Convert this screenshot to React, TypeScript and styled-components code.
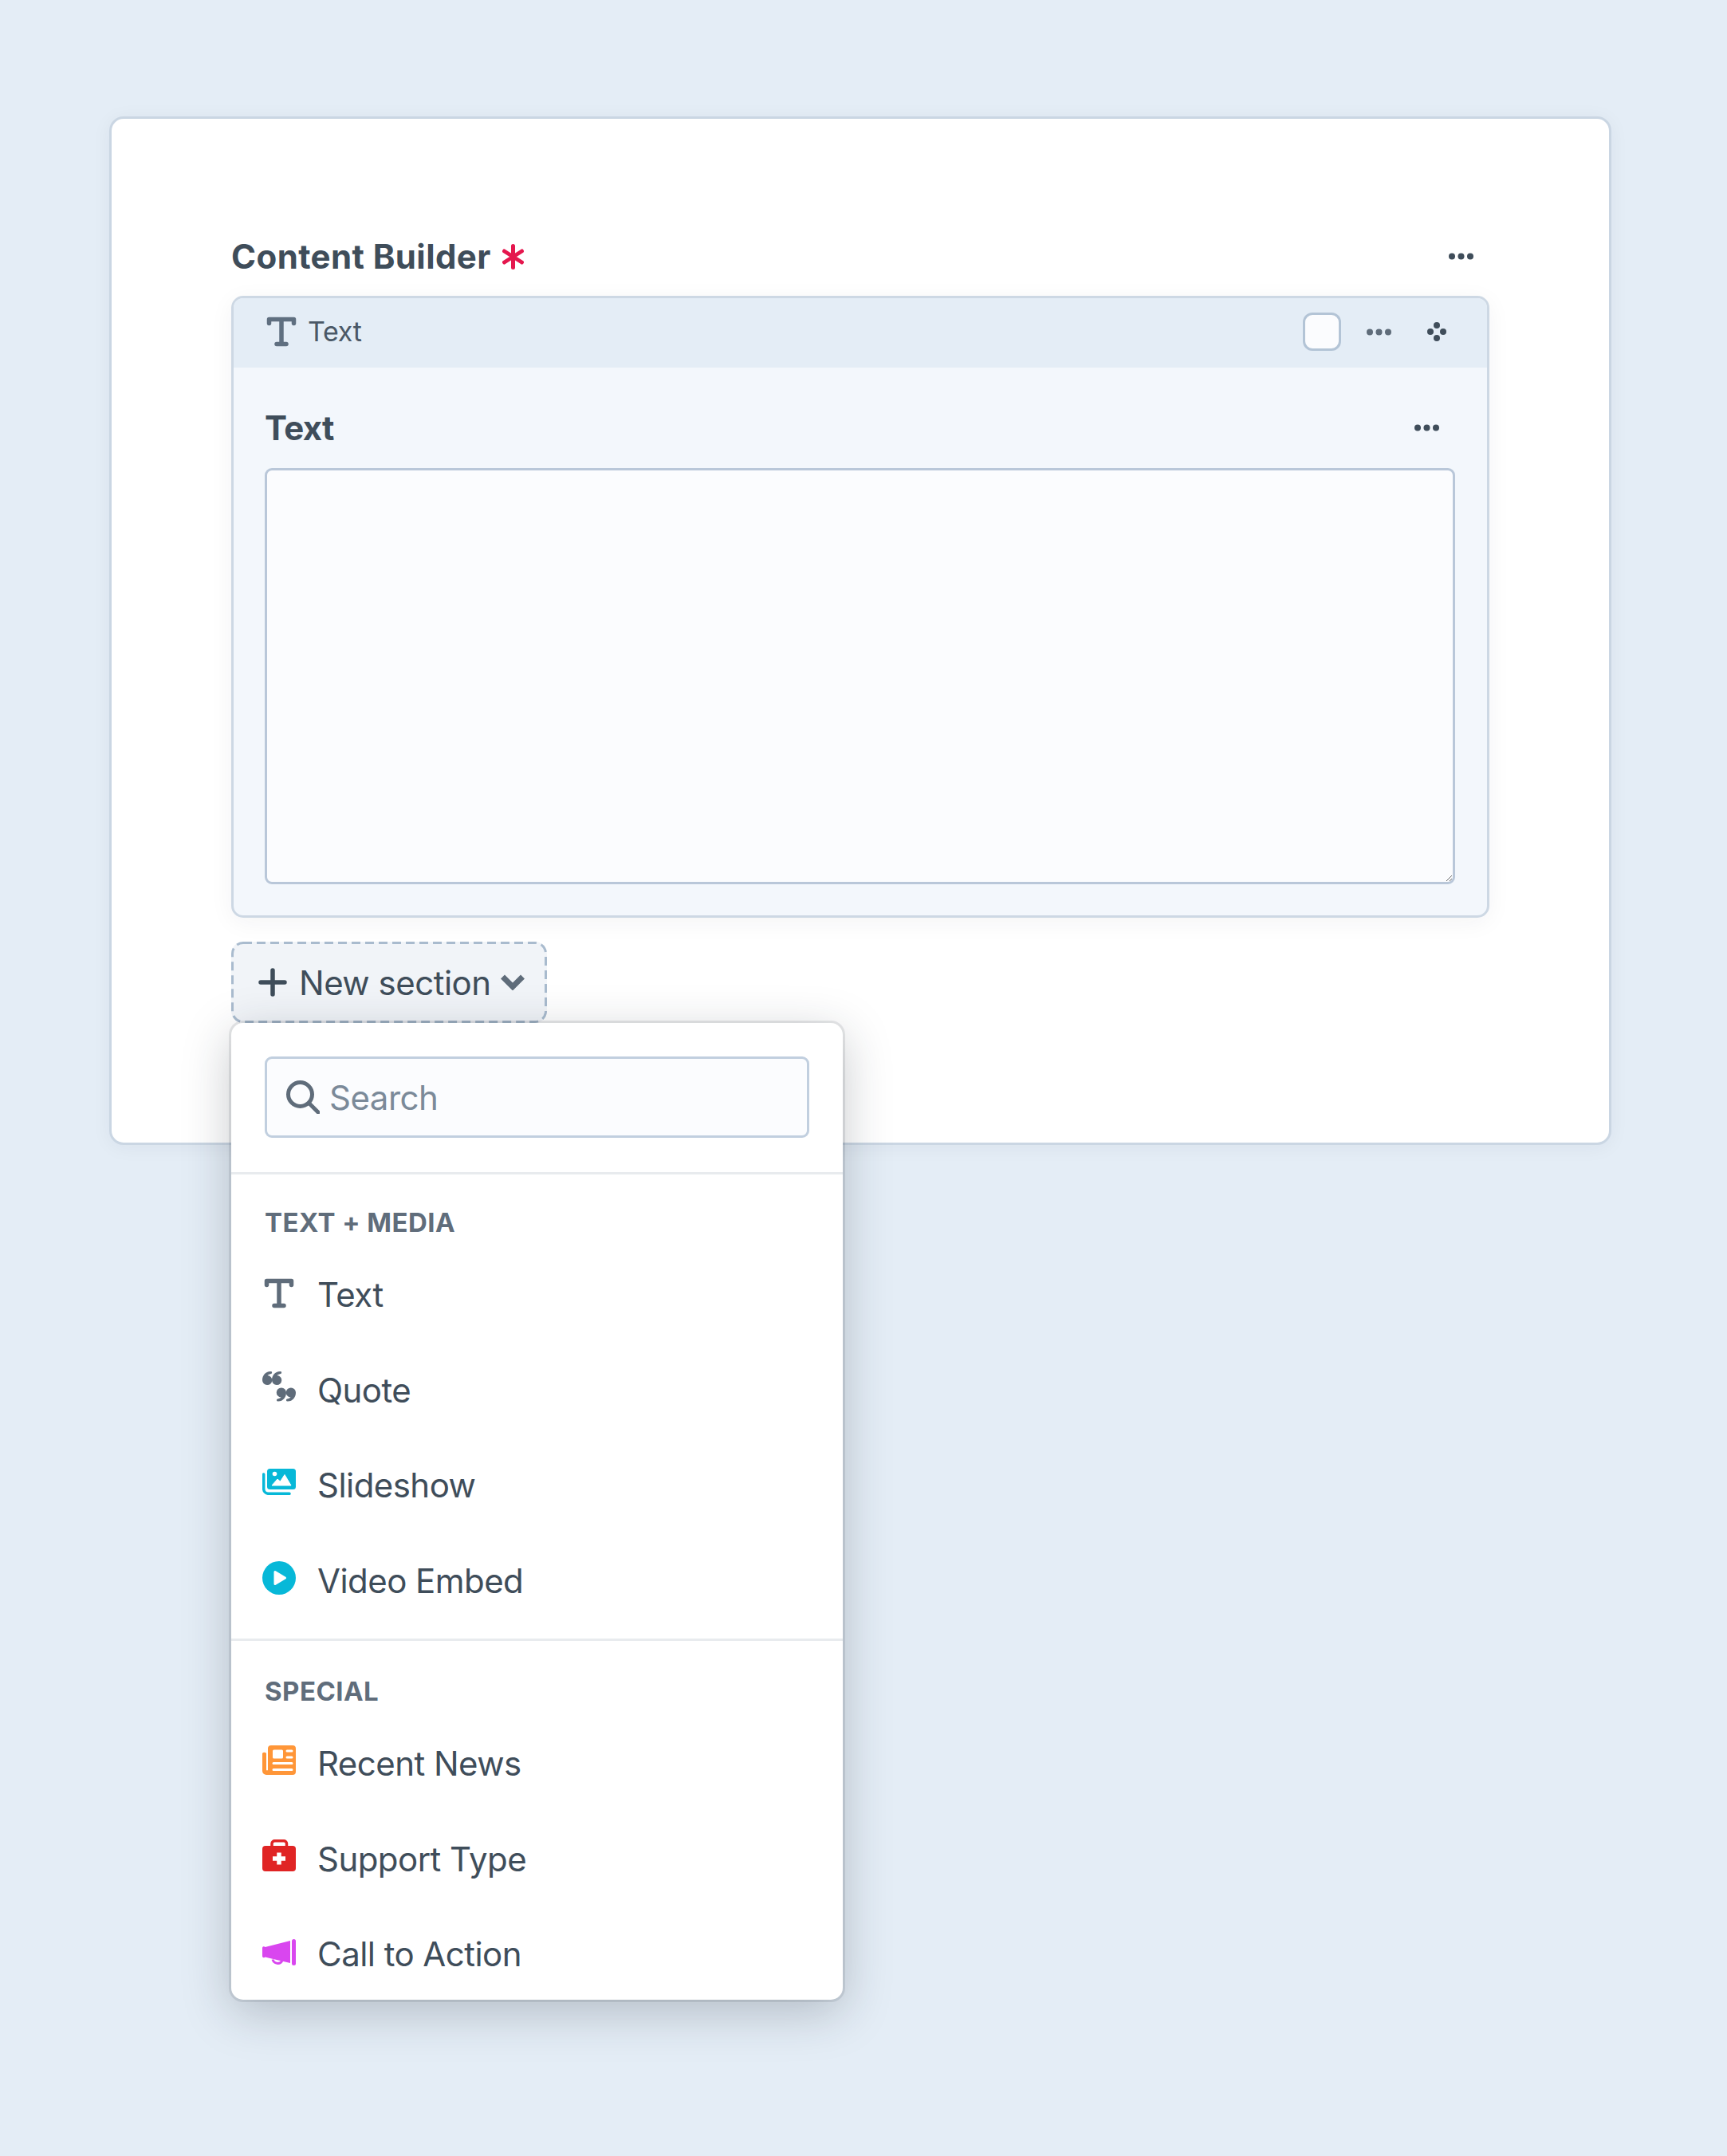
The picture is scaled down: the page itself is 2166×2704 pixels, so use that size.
import React from "react";
import styled, { createGlobalStyle } from "styled-components";

const Global = createGlobalStyle`
  html, body { margin: 0; padding: 0; background: #e4edf6; }
  body {
    font-family: Inter, "Liberation Sans", sans-serif;
    color: #3f4d5a;
    -webkit-font-smoothing: antialiased;
  }
  * { box-sizing: border-box; }
`;

const Page = styled.div`
  width: 2166px;
  height: 2704px;
  padding: 146px 145px 0 137px;
`;

const Card = styled.div`
  background: #fff;
  border: 3px solid #cad6e3;
  border-radius: 18px;
  padding: 141px 150px 150px 150px;
  box-shadow: 0 3px 24px rgba(31, 41, 51, 0.05);
`;

const FieldHead = styled.div<{ $gap: number }>`
  display: flex;
  align-items: center;
  justify-content: space-between;
  height: 63px;
  margin-bottom: ${(p) => p.$gap}px;
`;

const FieldLabel = styled.div<{ $spacing: number }>`
  display: flex;
  align-items: center;
  gap: 14px;
  font-size: 42px;
  font-weight: 700;
  line-height: 63px;
  letter-spacing: ${(p) => p.$spacing}px;
  color: #3f4d5a;
`;

const DotsWrap = styled.div<{ $right: number }>`
  display: flex;
  margin-right: ${(p) => p.$right}px;
`;

const Block = styled.div`
  border: 3px solid #cdd8e4;
  border-radius: 15px;
  background: #f3f7fc;
  overflow: hidden;
  box-shadow: 0 6px 30px rgba(31, 41, 51, 0.05);
`;

const BlockHeader = styled.div`
  display: flex;
  align-items: center;
  height: 87px;
  background: #e4edf6;
  padding: 0 51px 3px 39px;
`;

const BlockTitle = styled.div`
  flex: 1;
  margin-left: 12px;
  font-size: 34px;
  line-height: 42px;
  letter-spacing: -0.3px;
  color: #4a5866;
`;

const Check = styled.div`
  width: 48px;
  height: 48px;
  background: #fbfcfe;
  border: 3px solid #b3c4d6;
  border-radius: 12px;
  margin-right: 32px;
`;

const HeaderActions = styled.div`
  display: flex;
  align-items: center;
  gap: 45px;
`;

const BlockBody = styled.div`
  padding: 44px 40px 39px 39px;
`;

const Area = styled.textarea`
  display: block;
  width: 100%;
  height: 522px;
  background: #fbfcfe;
  border: 3px solid #b9c7d9;
  border-radius: 9px;
  outline: none;
  resize: both;
`;

const NewWrap = styled.div`
  position: relative;
  margin-top: 30px;
`;

const NewButton = styled.div`
  position: relative;
  display: inline-flex;
  align-items: center;
  width: 396px;
  height: 102px;
  padding-left: 34px;
  border-radius: 15px;
  background: #f1f4f8;
  font-size: 42px;
  letter-spacing: -0.5px;
  color: #3f4d5a;
`;

const DashedEdge = styled.svg`
  position: absolute;
  inset: 0;
`;

const NewLabel = styled.span`
  margin: 0 12px 0 15px;
`;

const Menu = styled.div`
  position: absolute;
  left: 0;
  top: 102px;
  width: 767px;
  height: 1225px;
  background: #fff;
  border-radius: 15px;
  box-shadow: 0 0 0 3px rgba(31, 41, 51, 0.1), 0 15px 60px rgba(31, 41, 51, 0.25);
`;

const SearchSection = styled.div`
  padding: 42px 42px 43px;
`;

const SearchBox = styled.label`
  display: flex;
  align-items: center;
  height: 102px;
  padding-left: 24px;
  gap: 12px;
  background: #fbfcfe;
  border: 3px solid #c1cfdf;
  border-radius: 9px;
`;

const SearchInput = styled.input`
  flex: 1;
  min-width: 0;
  border: 0;
  outline: 0;
  background: transparent;
  padding: 0;
  font: 400 42px Inter, sans-serif;
  letter-spacing: -0.5px;
  color: #3f4d5a;
  &::placeholder { color: #7b8a99; opacity: 1; }
`;

const Divider = styled.hr<{ $top: number }>`
  height: 3px;
  margin: ${(p) => p.$top}px 0 0;
  border: 0;
  background: #e8ebee;
`;

const Heading = styled.div<{ $top: number }>`
  height: 39px;
  margin: ${(p) => p.$top}px 42px 11px;
  font-size: 33px;
  line-height: 39px;
  font-weight: 700;
  letter-spacing: 0.45px;
  color: #606d7b;
`;

const Row = styled.div`
  display: flex;
  align-items: center;
  height: 119.5px;
  padding-left: 39px;
  font-size: 42px;
  letter-spacing: -0.55px;
`;

const IconBox = styled.div<{ $lift: number }>`
  display: flex;
  justify-content: center;
  width: 42px;
  margin: 0 27px ${(p) => p.$lift}px 0;
`;

const MenuText = styled.span`
  color: #3f4d5a;
`;

const Dots = ({ color = "#3f4d5a" }: { color?: string }) => (
  <svg width="31" height="9" viewBox="0 0 31 9" fill={color}>
    <circle cx="4" cy="4.5" r="4" />
    <circle cx="15.5" cy="4.5" r="4" />
    <circle cx="27" cy="4.5" r="4" />
  </svg>
);

const Move = () => (
  <svg width="24" height="24" viewBox="0 0 24 24" fill="#3f4d5a">
    <circle cx="12" cy="4" r="4" />
    <circle cx="4" cy="12" r="4" />
    <circle cx="20" cy="12" r="4" />
    <circle cx="12" cy="20" r="4" />
  </svg>
);

const Asterisk = () => (
  <svg width="27" height="32" viewBox="0 0 27 32" stroke="#e5174e" strokeWidth="5" strokeLinecap="round">
    <path d="M13.5 2.5v27M2.5 9l22 14M24.500 9l-22 14" />
  </svg>
);

const TIcon = ({ color = "#5f6f80" }: { color?: string }) => (
  <svg width="42" height="38" viewBox="0 0 42 38" fill="none" stroke={color} strokeWidth="5.5" strokeLinecap="round" strokeLinejoin="round">
    <path d="M5.500 8.500V3.500H36.500V8.500M21 3.500V34.500M15 34.500H27" />
  </svg>
);

const QuoteMark = "M6 17A6 6 0 0 1 0 11C0 5 4 0 10 0A1.500 1.500 0 0 1 11 3C8.500 3.500 7 4.500 6.500 5A6 6 0 0 1 6 17Z";
const QuoteIcon = () => (
  <svg width="42" height="38" viewBox="0 0 42 38" fill="#5f6c7a">
    <path d={QuoteMark} />
    <path d={QuoteMark} transform="translate(12 0)" />
    <path d={QuoteMark} transform="translate(30 37.500) rotate(180)" />
    <path d={QuoteMark} transform="translate(42 37.500) rotate(180)" />
  </svg>
);

const SlideIcon = () => (
  <svg width="42" height="33" viewBox="0 0 42 33">
    <rect x="6" y="0" width="36" height="26" rx="3.500" fill="#07b8d8" />
    <path d="M1.700 7V25.500A6 6 0 0 0 7.700 31.300H34" fill="none" stroke="#07b8d8" strokeWidth="3.500" strokeLinecap="round" />
    <circle cx="15.500" cy="6.500" r="2.800" fill="#fff" />
    <path d="M12 21L19 13L22.500 16L28 7.500L36 21Z" fill="#fff" stroke="#fff" strokeLinejoin="round" />
  </svg>
);

const PlayIcon = () => (
  <svg width="42" height="42" viewBox="0 0 42 42">
    <circle cx="21" cy="21" r="21" fill="#07b8d8" />
    <path d="M16 13.500V28.500L28.500 21Z" fill="#fff" stroke="#fff" strokeWidth="3" strokeLinejoin="round" />
  </svg>
);

const NewsIcon = () => (
  <svg width="42" height="37" viewBox="0 0 42 37">
    <path d="M7 4A4 4 0 0 1 11 0H38A4 4 0 0 1 42 4V33A4 4 0 0 1 38 37H5A5 5 0 0 1 0 32V10A3 3 0 0 1 5 10V31A1.500 1.500 0 0 0 7 31Z" fill="#ff9638" />
    <rect x="13" y="5.500" width="13" height="11" rx="1.500" fill="#fff" />
    <path d="M31 7H37M31 15H37M14 22.500H37M14 30.500H37" stroke="#fff" strokeWidth="3" strokeLinecap="round" />
  </svg>
);

const KitIcon = () => (
  <svg width="42" height="40" viewBox="0 0 42 40">
    <path d="M12 9V5A3.500 3.500 0 0 1 15.500 1.750H27A3.500 3.500 0 0 1 30.500 5V9" fill="none" stroke="#e02424" strokeWidth="3.500" />
    <rect x="0" y="8" width="42" height="32" rx="4" fill="#e02424" />
    <path d="M21 16.500V31.500M13 24H29" stroke="#fff" strokeWidth="5.500" />
  </svg>
);

const MegaIcon = () => (
  <svg width="42" height="33" viewBox="0 0 42 33" fill="#d946ef">
    <rect x="37" y="0" width="5" height="33" rx="2.500" />
    <path d="M0 11A2 2 0 0 1 3.500 10L35 2V30L18 26L3.500 22.500A2 2 0 0 1 0 21Z" />
    <path d="M13 25.500A6.500 6.500 0 0 0 25 27" fill="none" stroke="#d946ef" strokeWidth="3" />
  </svg>
);

const Plus = () => (
  <svg width="36" height="36" viewBox="0 0 36 36" stroke="#3f4d5a" strokeWidth="5.500" strokeLinecap="round">
    <path d="M18 3V33M3 18H33" />
  </svg>
);

const Chevron = () => (
  <svg width="30" height="20" viewBox="0 0 30 20" fill="none" stroke="#5f6c7a" strokeWidth="7">
    <path d="M2.500 3L15 15.500L27.500 3" />
  </svg>
);

const SearchGlass = () => (
  <svg width="42" height="42" viewBox="0 0 42 42" fill="none" stroke="#5f6c7a" strokeWidth="5" strokeLinecap="round">
    <circle cx="17.500" cy="17.500" r="15" />
    <path d="M28.500 28.500L40 40" />
  </svg>
);

const firstGroup = [
  { name: "Text", lift: 4, icon: <TIcon color="#5f6c7a" /> },
  { name: "Quote", lift: 9, icon: <QuoteIcon /> },
  { name: "Slideshow", lift: 8, icon: <SlideIcon /> },
  { name: "Video Embed", lift: 6, icon: <PlayIcon /> },
];

const secondGroup = [
  { name: "Recent News", lift: 8, icon: <NewsIcon /> },
  { name: "Support Type", lift: 9, icon: <KitIcon /> },
  { name: "Call to Action", lift: 5, icon: <MegaIcon /> },
];

const MenuRow = ({ name, icon, lift }: { name: string; icon: React.ReactNode; lift: number }) => (
  <Row>
    <IconBox $lift={lift}>{icon}</IconBox>
    <MenuText>{name}</MenuText>
  </Row>
);

export default function App() {
  return (
    <Page>
      <Global />
      <Card>
        <FieldHead $gap={18}>
          <FieldLabel $spacing={0.4}>
            Content Builder
            <Asterisk />
          </FieldLabel>
          <DotsWrap $right={20}>
            <Dots />
          </DotsWrap>
        </FieldHead>
        <Block>
          <BlockHeader>
            <TIcon />
            <BlockTitle>Text</BlockTitle>
            <Check />
            <HeaderActions>
              <Dots color="#5f6c7a" />
              <Move />
            </HeaderActions>
          </BlockHeader>
          <BlockBody>
            <FieldHead $gap={19}>
              <FieldLabel $spacing={-0.6}>Text</FieldLabel>
              <DotsWrap $right={20}>
                <Dots />
              </DotsWrap>
            </FieldHead>
            <Area />
          </BlockBody>
        </Block>
        <NewWrap>
          <NewButton>
            <DashedEdge width="396" height="102" viewBox="0 0 396 102" fill="none">
              <rect x="1.500" y="1.500" width="393" height="99" rx="13.500" stroke="#a9bbce" strokeWidth="3" strokeDasharray="11 6" />
            </DashedEdge>
            <Plus />
            <NewLabel>New section</NewLabel>
            <Chevron />
          </NewButton>
          <Menu>
            <SearchSection>
              <SearchBox>
                <SearchGlass />
                <SearchInput placeholder="Search" />
              </SearchBox>
            </SearchSection>
            <Divider $top={0} />
            <Heading $top={41}>TEXT + MEDIA</Heading>
            {firstGroup.map((item) => (
              <MenuRow key={item.name} {...item} />
            ))}
            <Divider $top={13} />
            <Heading $top={44}>SPECIAL</Heading>
            {secondGroup.map((item) => (
              <MenuRow key={item.name} {...item} />
            ))}
          </Menu>
        </NewWrap>
      </Card>
    </Page>
  );
}
